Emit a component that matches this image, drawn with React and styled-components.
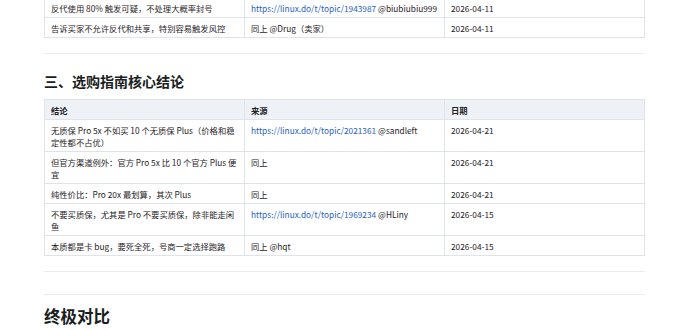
import React from 'react';
import styled, { createGlobalStyle } from 'styled-components';

const GlobalStyle = createGlobalStyle`
  html, body {
    margin: 0;
    padding: 0;
    background: #fff;
  }
  body {
    font-family: 'Noto Sans CJK SC', 'Noto Sans', sans-serif;
    color: #1f2328;
    overflow: hidden;
  }
`;

const Page = styled.div`
  width: 601px;
  margin: -3px 0 0 44px;
  font-size: 8.3px;
  line-height: 12px;
`;

const Table = styled.table`
  width: 601px;
  table-layout: fixed;
  border-collapse: collapse;
  border: 1px solid #dfe4eb;
  th,
  td {
    border: 1px solid #dfe4eb;
    padding: 4px 6px 3px;
    text-align: left;
    vertical-align: top;
    word-break: break-all;
  }
  th {
    background: #eef2f7;
    font-weight: 700;
  }
`;

const Rule = styled.hr`
  border: 0;
  height: 1px;
  background: #e9ecf0;
  margin: ${(p) => p.$gap || '15px 0 0'};
`;

const SectionTitle = styled.h3`
  font-size: 14px;
  line-height: 20px;
  font-weight: 700;
  margin: 17px 0 8px;
  color: #1a1d21;
`;

const BigTitle = styled.h2`
  font-size: 16.5px;
  line-height: 22px;
  font-weight: 700;
  margin: 10px 0 0;
  color: #1a1d21;
`;

const Link = styled.a`
  color: #2a62c4;
  text-decoration: none;
`;

const Source = ({ topic, who }) => (
  <>
    {topic ? <Link href='#'>{`https://linux.do/t/topic/${topic}`}</Link> : '同上'}
    {who && ` ${who}`}
  </>
);

const before = [
  { text: '反代使用 80% 触发可疑，不处理大概率封号', topic: '1943987', who: '@biubiubiu999', date: '2026-04-11' },
  { text: '告诉买家不允许反代和共享，特别容易触发风控', who: '@Drug（卖家）', date: '2026-04-11' },
];

const guide = [
  { text: '无质保 Pro 5x 不如买 10 个无质保 Plus（价格和稳定性都不占优）', topic: '2021361', who: '@sandleft', date: '2026-04-21' },
  { text: '但官方渠道例外：官方 Pro 5x 比 10 个官方 Plus 便宜', date: '2026-04-21' },
  { text: '纯性价比：Pro 20x 最划算，其次 Plus', date: '2026-04-21' },
  { text: '不要买质保，尤其是 Pro 不要买质保，除非能走闲鱼', topic: '1969234', who: '@HLiny', date: '2026-04-15' },
  { text: '本质都是卡 bug，要死全死，号商一定选择跑路', who: '@hqt', date: '2026-04-15' },
];

const Cols = () => (
  <colgroup>
    <col style={{ width: 200 }} />
    <col style={{ width: 200 }} />
    <col style={{ width: 200 }} />
  </colgroup>
);

const Rows = ({ items }) =>
  items.map((r, i) => (
    <tr key={i}>
      <td>{r.text}</td>
      <td>
        <Source topic={r.topic} who={r.who} />
      </td>
      <td>{r.date}</td>
    </tr>
  ));

export default function App() {
  return (
    <>
      <GlobalStyle />
      <Page>
        <Table>
          <Cols />
          <tbody>
            <Rows items={before} />
          </tbody>
        </Table>
        <Rule />
        <SectionTitle>三、选购指南核心结论</SectionTitle>
        <Table>
          <Cols />
          <thead>
            <tr>
              <th>结论</th>
              <th>来源</th>
              <th>日期</th>
            </tr>
          </thead>
          <tbody>
            <Rows items={guide} />
          </tbody>
        </Table>
        <Rule />
        <Rule $gap='22px 0 0' />
        <BigTitle>终极对比</BigTitle>
      </Page>
    </>
  );
}
